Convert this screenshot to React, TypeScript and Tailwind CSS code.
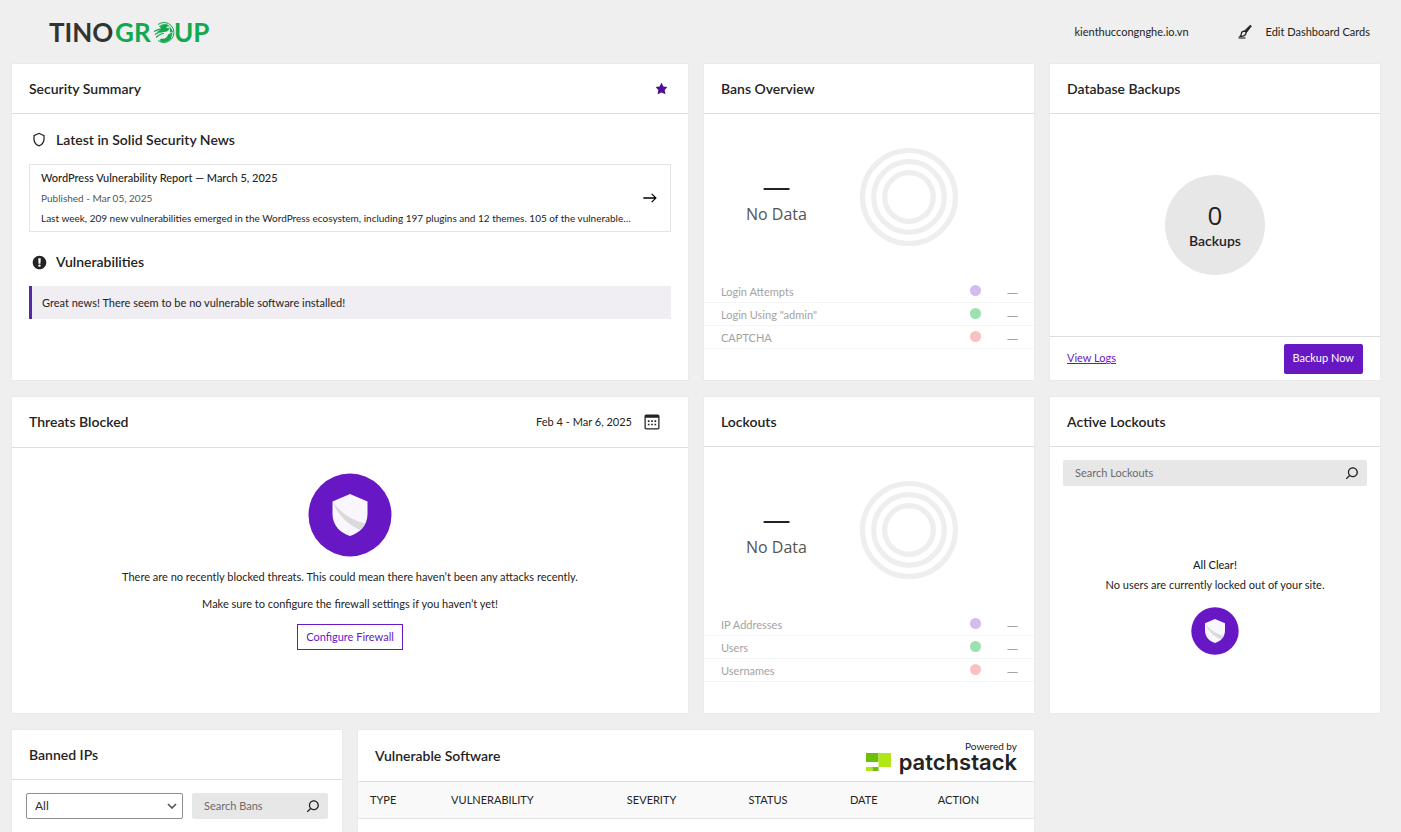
import type { ReactNode } from "react";

const SEARCH =
  "M13 5c-3.3 0-6 2.7-6 6 0 1.4.5 2.7 1.3 3.7l-3.8 3.8 1.1 1.1 3.8-3.8c1 .8 2.3 1.3 3.7 1.3 3.3 0 6-2.7 6-6S16.3 5 13 5zm0 10.5c-2.5 0-4.5-2-4.5-4.5s2-4.5 4.5-4.5 4.5 2 4.5 4.5-2 4.5-4.5 4.5z";
const SHIELD =
  "M12 3.176l6.75 3.068v4.574c0 3.9-2.504 7.59-6.035 8.755a2.283 2.283 0 01-1.43 0c-3.53-1.164-6.035-4.856-6.035-8.755V6.244L12 3.176zM6.75 7.21v3.608c0 3.313 2.145 6.388 5.005 7.33.159.053.331.053.49 0 2.86-.942 5.005-4.017 5.005-7.33V7.21L12 4.824 6.75 7.21z";
const ARROW = "m14.5 6.5-1 1 3.7 3.7H4v1.6h13.2l-3.7 3.7 1 1 5.6-5.5z";
const CALENDAR =
  "M19 3H5c-1.1 0-2 .9-2 2v14c0 1.1.9 2 2 2h14c1.1 0 2-.9 2-2V5c0-1.1-.9-2-2-2zm.5 16c0 .3-.2.5-.5.5H5c-.3 0-.5-.2-.5-.5V7h15v12zM9 10H7v2h2v-2zm0 4H7v2h2v-2zm4-4h-2v2h2v-2zm4 0h-2v2h2v-2zm-4 4h-2v2h2v-2zm4 0h-2v2h2v-2z";
const WARNING =
  "M10 2c4.42 0 8 3.58 8 8s-3.58 8-8 8-8-3.58-8-8 3.58-8 8-8zm1.13 9.38.35-6.46H8.52l.35 6.46h2.26zm-.09 3.36c.24-.23.37-.55.37-.96 0-.42-.12-.74-.36-.97s-.59-.35-1.06-.35-.82.12-1.07.35-.37.55-.37.97c0 .41.13.73.38.96.26.23.61.34 1.06.34s.8-.11 1.05-.34z";
const STAR = "m10 1 3 6 6 .75-4.12 4.62L16 19l-6-3-6 3 1.13-6.63L1 7.75 7 7z";

const banRows = [
  { label: "Login Attempts", dot: "bg-[#d4bcee]" },
  { label: 'Login Using "admin"', dot: "bg-[#9ae3ae]" },
  { label: "CAPTCHA", dot: "bg-[#fbc1c1]" },
];

const lockoutRows = [
  { label: "IP Addresses", dot: "bg-[#d4bcee]" },
  { label: "Users", dot: "bg-[#9ae3ae]" },
  { label: "Usernames", dot: "bg-[#fbc1c1]" },
];

const columns = [
  { label: "Type", width: "w-[12%]" },
  { label: "Vulnerability", width: "w-[26%]" },
  { label: "Severity", width: "w-[18%]" },
  { label: "Status", width: "w-[15%]" },
  { label: "Date", width: "w-[13%]" },
  { label: "Action", width: "w-[16%]" },
];

function Icon({ path, box = 24, className }: { path: string; box?: number; className: string }) {
  return (
    <svg viewBox={`0 0 ${box} ${box}`} fill="currentColor" aria-hidden="true" className={`shrink-0 ${className}`}>
      <path d={path} />
    </svg>
  );
}

function Logo() {
  return (
    <svg viewBox="0 0 160 28" className="h-7 w-40 overflow-visible" role="img" aria-label="TinoGroup">
      <g fontFamily="Lato, sans-serif" fontSize="26" fontWeight="700">
        <text x="-1" y="24" fill="#333333">TINO</text>
        <text x="65" y="24" fill="#12a84f">GR</text>
        <text x="124" y="24" fill="#12a84f">UP</text>
      </g>
      <g fill="none" stroke="#12a84f">
        <path d="M108 6.5A10 10 0 1 1 108 22.5" strokeWidth="1" />
        <path d="M109 8.5A8 8 0 1 1 110 21.5" strokeWidth="0.8" />
        <path d="M104 13.500q6-4 12-2M105 16.500q5-4 9-3M106 19.500q4-4 8-4" strokeWidth="1.2" />
      </g>
      <path d="M110 8.500q5-4 9-1l-3 2 4 1-3 3-6 1-4-1 4-2zM111 20.500q6 1 7-4l4-2-1 6q-4 5-11 3zM120 9.500l3 4-3 1z" fill="#12a84f" />
    </svg>
  );
}

function SolidShield({ className }: { className: string }) {
  return (
    <svg viewBox="0 0 84 84" aria-hidden="true" className={className}>
      <circle cx="42" cy="42" r="41.5" fill="#6817c5" />
      <path d="M42 21 59.500 28.500V41C59.500 53 51 60 42 63 33 60 24.500 53 24.500 41V28.500Z" fill="#f9f6fe" />
      <path d="M24.500 29C33 40 44 47.500 57.500 50.500Q55.500 54 52.500 57C40 52 30 42 24.500 29Z" fill="#dadada" />
    </svg>
  );
}

function Card({
  title,
  aside,
  className = "",
  children,
}: {
  title: string;
  aside?: ReactNode;
  className?: string;
  children: ReactNode;
}) {
  return (
    <section className={`flex flex-col bg-white shadow-[0_0_1px_#d4d4d4] ${className}`}>
      <header className="flex min-h-[50px] shrink-0 items-center justify-between border-b border-[#dedede] px-[17px]">
        <h2 className="text-sm font-semibold">{title}</h2>
        {aside}
      </header>
      {children}
    </section>
  );
}

function EmptyChart({ rows }: { rows: { label: string; dot: string }[] }) {
  return (
    <>
      <div className="flex h-[165px] items-center gap-[52px] pl-[42px]">
        <div className="flex flex-col items-center font-['Open_Sans',sans-serif]">
          <span className="text-[28px] leading-[34px]">—</span>
          <span className="text-base leading-6 text-[#545454]">No Data</span>
        </div>
        <svg viewBox="0 0 100 100" className="size-[100px]" aria-hidden="true">
          <g fill="none" stroke="#eeeeee" strokeWidth="5.2">
            <circle cx="50" cy="50" r="46.500" />
            <circle cx="50" cy="50" r="35.300" />
            <circle cx="50" cy="50" r="24.300" />
          </g>
        </svg>
      </div>
      <table className="w-full text-[#a3a3a3]">
        <tbody>
          {rows.map((row) => (
            <tr key={row.label} className="h-[23px] border-b border-[#f5f5f5]">
              <th scope="row" className="pt-[3px] pl-[17px] text-left font-normal">{row.label}</th>
              <td className="w-6">
                <span className={`block size-[11px] rounded-full ${row.dot}`} />
              </td>
              <td className="w-10 pt-[3px] pr-4 text-right font-['Open_Sans',sans-serif]">—</td>
            </tr>
          ))}
        </tbody>
      </table>
    </>
  );
}

function SearchBox({ label }: { label: string }) {
  return (
    <div className="flex h-[26px] min-w-0 items-center rounded-xs bg-[#e7e7e7] pr-[5px] pl-3">
      <input
        type="search"
        aria-label={label}
        placeholder={label}
        className="w-full min-w-0 bg-transparent outline-none placeholder:text-[#6b6b6b]"
      />
      <Icon path={SEARCH} className="size-5 text-[#232323]" />
    </div>
  );
}

export default function App() {
  return (
    <div className="flex min-h-screen flex-col bg-[#efefef] pr-[21px] pl-3 font-[Lato,sans-serif] text-[11px] text-[#232323]">
      <header className="flex h-16 shrink-0 items-center justify-between pr-[10px] pl-[38px]">
        <Logo />
        <div className="flex items-center">
          <span className="mr-[49px]">kienthuccongnghe.io.vn</span>
          <button type="button" className="flex items-center gap-[14px]">
            <svg viewBox="0 0 14 16" className="h-4 w-3.5" aria-hidden="true">
              <path d="M12.300 1.200 6.800 6.700 8.500 8.400 13.300 2.100Z" fill="#232323" stroke="#232323" strokeLinejoin="round" />
              <path d="M6.200 7.100Q8.400 7.500 8 9.500 7 12.500 2 12.500 3.300 11.300 3.400 9.500 3.700 7.200 6.200 7.100Z" fill="none" stroke="#232323" strokeWidth="1.300" />
              <path d="M.5 14h7" stroke="#666666" strokeWidth="1.700" />
            </svg>
            Edit Dashboard Cards
          </button>
        </div>
      </header>

      <main className="grid flex-1 grid-cols-4 grid-rows-[316px_316px_1fr] gap-x-4 gap-y-[17px]">
        <Card
          title="Security Summary"
          className="col-span-2"
          aside={
            <button type="button" aria-label="Favorite" className="mr-[3px]">
              <Icon path={STAR} box={20} className="size-[13px] text-[#4a1192]" />
            </button>
          }
        >
          <div className="px-[17px] pt-4">
            <h3 className="flex items-center gap-[7px] text-sm leading-5 font-semibold">
              <Icon path={SHIELD} className="size-5" />
              Latest in Solid Security News
            </h3>
            <a href="#report" className="mt-[14px] flex h-[68px] items-center border border-[#e4e4e4] pr-[10px] pl-[11px]">
              <span className="min-w-0 flex-1">
                <span className="block leading-5 font-medium">WordPress Vulnerability Report — March 5, 2025</span>
                <span className="block text-[10px] leading-5 text-[#545454]">Published - Mar 05, 2025</span>
                <span className="block text-[10px] leading-5">
                  Last week, 209 new vulnerabilities emerged in the WordPress ecosystem, including 197 plugins and 12 themes. 105 of the vulnerable…
                </span>
              </span>
              <Icon path={ARROW} className="size-5 text-black" />
            </a>
            <h3 className="mt-5 flex items-center gap-[7px] text-sm leading-5 font-semibold">
              <Icon path={WARNING} box={20} className="mr-px ml-[2px] size-[17px]" />
              Vulnerabilities
            </h3>
            <p className="mt-[14px] border-l-[3px] border-[#552aa5] bg-[#f0edf3] pl-[10px] leading-[33px]">
              Great news! There seem to be no vulnerable software installed!
            </p>
          </div>
        </Card>

        <Card title="Bans Overview">
          <EmptyChart rows={banRows} />
        </Card>

        <Card title="Database Backups">
          <div className="flex flex-1 items-center justify-center">
            <div className="flex size-[100px] flex-col items-center justify-center rounded-full bg-[#e7e7e7]">
              <span className="font-['Open_Sans',sans-serif] text-[26px] leading-8">0</span>
              <span className="text-sm leading-5 font-semibold">Backups</span>
            </div>
          </div>
          <footer className="flex h-11 items-center justify-between border-t border-[#dedede] px-[17px]">
            <a href="#logs" className="text-[#6817c5] underline">View Logs</a>
            <button type="button" className="h-[30px] rounded-xs bg-[#6817c5] px-[9px] text-white">Backup Now</button>
          </footer>
        </Card>

        <Card
          title="Threats Blocked"
          className="col-span-2"
          aside={
            <button type="button" className="mr-[9px] flex h-[50px] items-center gap-[10px]">
              Feb 4 - Mar 6, 2025
              <Icon path={CALENDAR} className="size-5" />
            </button>
          }
        >
          <div className="flex flex-col items-center pt-[25px]">
            <SolidShield className="size-[84px]" />
            <p className="mt-[10px] leading-5">
              There are no recently blocked threats. This could mean there haven’t been any attacks recently.
            </p>
            <p className="mt-[7px] leading-5">Make sure to configure the firewall settings if you haven’t yet!</p>
            <button type="button" className="mt-[10px] h-[26px] border border-[#6817c5] px-2 text-[#6817c5]">
              Configure Firewall
            </button>
          </div>
        </Card>

        <Card title="Lockouts">
          <EmptyChart rows={lockoutRows} />
        </Card>

        <Card title="Active Lockouts">
          <div className="px-[13px] pt-[13px]">
            <SearchBox label="Search Lockouts" />
          </div>
          <div className="flex flex-1 flex-col items-center justify-center pt-[10px]">
            <p className="leading-5 font-medium">All Clear!</p>
            <p className="leading-5">No users are currently locked out of your site.</p>
            <SolidShield className="mt-3 size-12" />
          </div>
        </Card>

        <Card title="Banned IPs">
          <div className="grid grid-cols-[157fr_136fr] gap-[9px] px-[14px] pt-[13px]">
            <div className="relative">
              <select
                aria-label="Ban type"
                className="h-[26px] w-full appearance-none rounded-xs border border-[#8c8f94] bg-white pl-2 text-xs text-[#2c3338]"
              >
                <option>All</option>
              </select>
              <svg viewBox="0 0 10 6" className="pointer-events-none absolute top-2.5 right-1.5 h-1.5 w-2.5" aria-hidden="true">
                <path d="m1 1 4 4 4-4" fill="none" stroke="#555555" strokeWidth="1.600" />
              </svg>
            </div>
            <SearchBox label="Search Bans" />
          </div>
        </Card>

        <Card
          title="Vulnerable Software"
          className="col-span-2"
          aside={
            <div className="flex h-[51px] flex-col items-end pt-[10px]">
              <span className="text-[10px] leading-3">Powered by</span>
              <div className="flex items-center gap-2">
                <svg viewBox="0 0 25 18" className="h-[18px] w-[25px]" aria-hidden="true">
                  <path d="M0 0h12.500v9H0z" fill="#6cbf06" />
                  <path d="M12.500 0H25v14H12.500z" fill="#b0e817" />
                  <path d="M0 14h6.500v4H0z" fill="#b0e817" />
                  <path d="M6.500 14h6v4h-6z" fill="#6cbf06" />
                </svg>
                <span className="font-[Inter,sans-serif] text-[22px] leading-5 font-semibold">patchstack</span>
              </div>
            </div>
          }
        >
          <table className="w-full table-fixed">
            <thead>
              <tr className="h-9 border-b border-[#e4e4e4] bg-[#f9f9f9]">
                {columns.map((column) => (
                  <th key={column.label} scope="col" className={`pl-3 text-left font-normal uppercase ${column.width}`}>
                    {column.label}
                  </th>
                ))}
              </tr>
            </thead>
          </table>
        </Card>
      </main>
    </div>
  );
}
